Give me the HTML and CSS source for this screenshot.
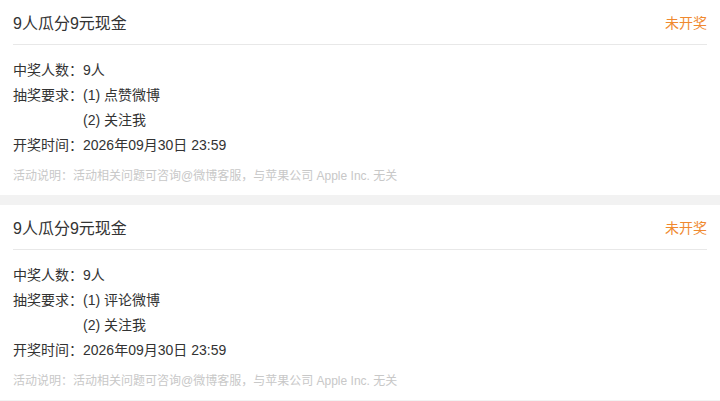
FILE: index.html
```html
<!DOCTYPE html>
<html lang="zh-CN">
<head>
<meta charset="utf-8">
<link rel="stylesheet" href="styles.css">
</head>
<body>
<div class="card">
  <div class="head">
    <span class="title">9人瓜分9元现金</span>
    <span class="status">未开奖</span>
  </div>
  <div class="body">
    <div class="row"><span class="label">中奖人数：</span><span class="value">9人</span></div>
    <div class="row"><span class="label">抽奖要求：</span><span class="value">(1) 点赞微博</span></div>
    <div class="row"><span class="label"></span><span class="value">(2) 关注我</span></div>
    <div class="row"><span class="label">开奖时间：</span><span class="value">2026年09月30日 23:59</span></div>
    <div class="note">活动说明：活动相关问题可咨询@微博客服，与苹果公司 Apple Inc. 无关</div>
  </div>
</div>
<div class="card">
  <div class="head">
    <span class="title">9人瓜分9元现金</span>
    <span class="status">未开奖</span>
  </div>
  <div class="body">
    <div class="row"><span class="label">中奖人数：</span><span class="value">9人</span></div>
    <div class="row"><span class="label">抽奖要求：</span><span class="value">(1) 评论微博</span></div>
    <div class="row"><span class="label"></span><span class="value">(2) 关注我</span></div>
    <div class="row"><span class="label">开奖时间：</span><span class="value">2026年09月30日 23:59</span></div>
    <div class="note">活动说明：活动相关问题可咨询@微博客服，与苹果公司 Apple Inc. 无关</div>
  </div>
</div>
</body>
</html>
```
FILE: styles.css
```css
html, body {
  margin: 0;
  padding: 0;
}
body {
  background: #f2f2f2;
  font-family: "Liberation Sans", "Noto Sans CJK SC", sans-serif;
  color: #333;
}
.card {
  background: #fff;
  padding: 0 13px;
  margin-bottom: 10px;
  height: 195px;
  box-sizing: border-box;
}
.head {
  height: 44px;
  display: flex;
  align-items: center;
  justify-content: space-between;
  border-bottom: 1px solid #e8e8e8;
}
.title {
  font-size: 16px;
  color: #333;
  margin-top: -1px;
}
.status {
  font-size: 14px;
  color: #f0892f;
  margin-top: -1px;
}
.body {
  padding-top: 13px;
}
.row {
  display: flex;
  font-size: 14px;
  line-height: 25px;
}
.label {
  width: 70px;
  flex: none;
}
.note {
  margin-top: 8px;
  font-size: 12px;
  line-height: 20px;
  color: #c8c8c8;
}
```
